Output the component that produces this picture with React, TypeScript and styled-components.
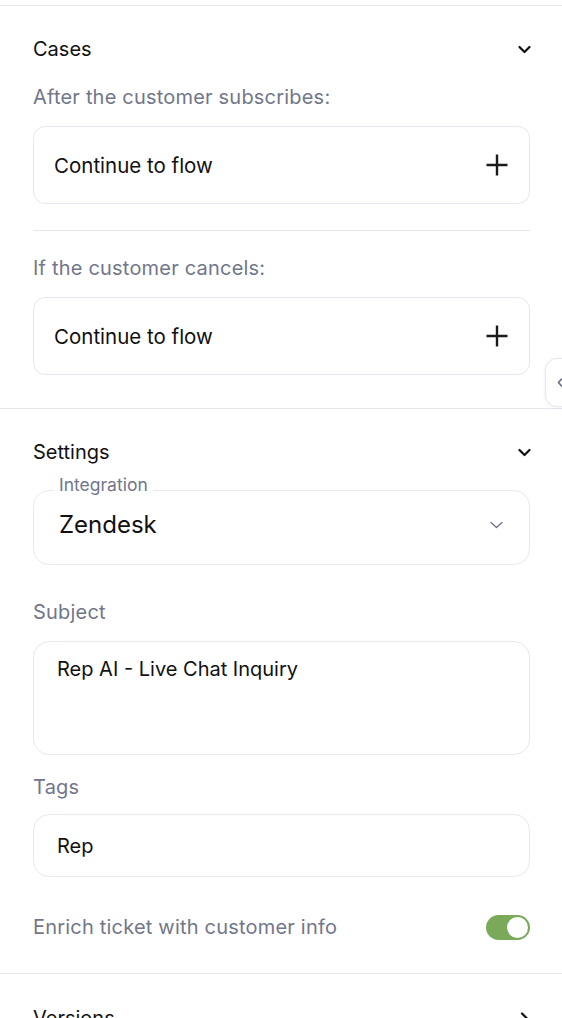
import React from 'react';
import styled, { createGlobalStyle } from 'styled-components';

const GlobalStyle = createGlobalStyle`
  html, body {
    margin: 0;
    padding: 0;
    background: #ffffff;
  }
  body {
    font-family: Inter, "Open Sans", "Liberation Sans", sans-serif;
    color: #111111;
    overflow: hidden;
  }
`;

const Panel = styled.div`
  position: relative;
  width: 562px;
  height: 1018px;
  padding-top: 5px;
  box-sizing: border-box;
  overflow: hidden;
  background: #fff;
`;

const Section = styled.section<{ $bottom?: number }>`
  border-top: 1px solid #e6e6ef;
  padding: 31px 32px ${p => p.$bottom ?? 33}px 33px;
  display: flex;
  flex-direction: column;
`;

const SectionHeader = styled.div<{ $shift?: number }>`
  display: flex;
  align-items: center;
  justify-content: space-between;
  height: 24px;
  margin-top: ${p => p.$shift ?? 0}px;
  font-size: 20px;
  line-height: 26px;
  color: #111;
`;

const HeaderIcon = styled.span`
  display: flex;
  width: 14px;
  justify-content: center;
  margin-right: -1px;
`;

const SubLabel = styled.div<{ $top: number }>`
  margin-top: ${p => p.$top}px;
  font-size: 20px;
  letter-spacing: 0.2px;
  line-height: 24px;
  color: #72768a;
`;

const FlowCard = styled.div`
  margin-top: 17px;
  height: 78px;
  box-sizing: border-box;
  border: 1px solid #e6e6f1;
  border-radius: 12px;
  display: flex;
  align-items: center;
  justify-content: space-between;
  padding: 0 20px 0 20px;
  font-size: 20.5px;
  color: #111;
`;

const Divider = styled.hr`
  border: none;
  border-top: 1px solid #e6e6ef;
  margin: 26px 0 0 0;
`;

const SelectBox = styled.fieldset`
  margin: 11px 0 0 0;
  border: 1px solid #e8e8ee;
  border-radius: 16px;
  padding: 6px 26px 25px 25px;
  min-width: 0;
  display: block;
`;

const Legend = styled.legend`
  font-size: 17.5px;
  line-height: 20px;
  padding: 0 5px 10px 5px;
  margin-left: -5px;
  color: #72768a;
`;

const SelectRow = styled.div`
  display: flex;
  align-items: center;
  justify-content: space-between;
  height: 28px;
  font-size: 24px;
  line-height: 28px;
  color: #111;
`;

const FieldLabel = styled.div<{ $top: number }>`
  margin-top: ${p => p.$top}px;
  font-size: 20px;
  letter-spacing: 0.2px;
  line-height: 24px;
  color: #72768a;
`;

const InputBox = styled.div<{ $height: number; $top: number; $align: string; $padTop?: number }>`
  margin-top: ${p => p.$top}px;
  height: ${p => p.$height}px;
  box-sizing: border-box;
  border: 1px solid #e8e8ee;
  border-radius: 16px;
  padding: ${p => p.$padTop ?? 0}px 22px 0 23px;
  display: flex;
  align-items: ${p => p.$align};
  font-size: 20px;
  line-height: 28px;
  color: #111;
`;

const ToggleRow = styled.div`
  margin-top: 37px;
  display: flex;
  align-items: center;
  justify-content: space-between;
  height: 26px;
  font-size: 20px;
  letter-spacing: 0.2px;
  color: #72768a;
`;

const Toggle = styled.div<{ $on: boolean }>`
  width: 44px;
  height: 25px;
  border-radius: 13px;
  background: ${p => (p.$on ? '#79a959' : '#d0d2da')};
  display: flex;
  align-items: center;
  justify-content: ${p => (p.$on ? 'flex-end' : 'flex-start')};
  padding: 0 2px;
  box-sizing: border-box;
`;

const Knob = styled.div`
  width: 21px;
  height: 21px;
  border-radius: 50%;
  background: #fff;
`;

const SideTab = styled.div`
  position: absolute;
  left: 545px;
  top: 358px;
  width: 40px;
  height: 49px;
  box-sizing: border-box;
  border: 1px solid #e6e6f1;
  border-radius: 12px;
  background: #fff;
  box-shadow: 0 1px 4px rgba(30, 30, 80, 0.06);
  display: flex;
  align-items: center;
  padding-left: 11px;
`;

const ChevronDown = () => (
  <svg width="13" height="9" viewBox="0 0 13 9" fill="none">
    <path d="M1.5 2 L6.5 7 L11.5 2" stroke="#111" strokeWidth="2.2" strokeLinecap="round" strokeLinejoin="round" />
  </svg>
);

const ChevronRight = () => (
  <svg width="9" height="13" viewBox="0 0 9 13" fill="none">
    <path d="M2 1.5 L7 6.5 L2 11.5" stroke="#111" strokeWidth="2.2" strokeLinecap="round" strokeLinejoin="round" />
  </svg>
);

const ThinChevron = () => (
  <svg width="13" height="8" viewBox="0 0 13 8" fill="none">
    <path d="M1 1.5 L6.5 6.5 L12 1.5" stroke="#6b6f85" strokeWidth="1.2" strokeLinecap="round" strokeLinejoin="round" />
  </svg>
);

const Plus = () => (
  <svg width="24" height="24" viewBox="0 0 24 24" fill="none">
    <path d="M12 1.5 V22.5 M1.5 12 H22.5" stroke="#1a1a1a" strokeWidth="2.4" />
  </svg>
);

const SmallLeft = () => (
  <svg width="6" height="9" viewBox="0 0 6 9" fill="none">
    <path d="M4.5 1 L1.5 4.5 L4.5 8" stroke="#6b6f85" strokeWidth="1.6" strokeLinecap="round" strokeLinejoin="round" />
  </svg>
);

export default function App() {
  return (
    <>
      <GlobalStyle />
      <Panel>
        <Section>
          <SectionHeader>
            Cases
            <HeaderIcon><ChevronDown /></HeaderIcon>
          </SectionHeader>
          <SubLabel $top={24}>After the customer subscribes:</SubLabel>
          <FlowCard>
            Continue to flow
            <Plus />
          </FlowCard>
          <Divider />
          <SubLabel $top={25}>If the customer cancels:</SubLabel>
          <FlowCard>
            Continue to flow
            <Plus />
          </FlowCard>
        </Section>

        <Section>
          <SectionHeader>
            Settings
            <HeaderIcon><ChevronDown /></HeaderIcon>
          </SectionHeader>
          <SelectBox>
            <Legend>Integration</Legend>
            <SelectRow>
              Zendesk
              <ThinChevron />
            </SelectRow>
          </SelectBox>
          <FieldLabel $top={35}>Subject</FieldLabel>
          <InputBox $top={17} $height={114} $align="flex-start" $padTop={13}>
            Rep AI - Live Chat Inquiry
          </InputBox>
          <FieldLabel $top={20}>Tags</FieldLabel>
          <InputBox $top={15} $height={63} $align="center">
            Rep
          </InputBox>
          <ToggleRow>
            Enrich ticket with customer info
            <Toggle $on>
              <Knob />
            </Toggle>
          </ToggleRow>
        </Section>

        <Section $bottom={0}>
          <SectionHeader $shift={1}>
            Versions
            <HeaderIcon><ChevronRight /></HeaderIcon>
          </SectionHeader>
        </Section>

        <SideTab>
          <SmallLeft />
        </SideTab>
      </Panel>
    </>
  );
}
